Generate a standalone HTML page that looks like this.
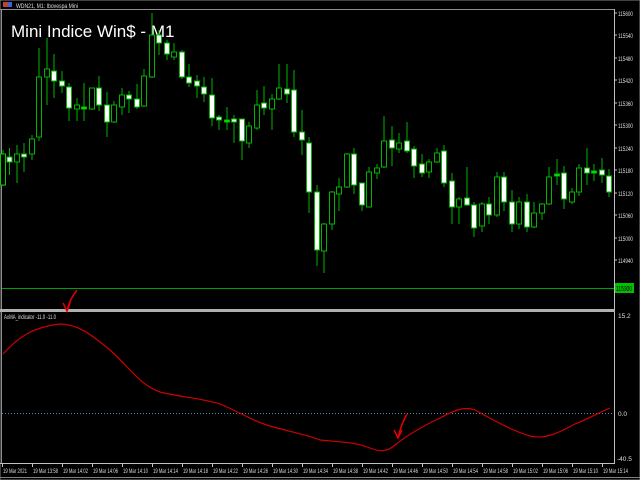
<!DOCTYPE html>
<html><head><meta charset="utf-8"><style>
html,body{margin:0;padding:0;background:#000;width:640px;height:480px;overflow:hidden}
svg{display:block}
text{font-family:"Liberation Sans",sans-serif}
</style></head><body>
<svg width="640" height="480" viewBox="0 0 640 480" xmlns="http://www.w3.org/2000/svg">
<rect width="640" height="480" fill="#000"/>
<rect x="0" y="0" width="640" height="480" fill="none" stroke="#808080" stroke-width="1"/>
<rect x="3" y="2" width="5" height="5" fill="#c04040"/><rect x="8" y="2" width="4" height="5" fill="#4060d0"/>
<text x="16" y="8" font-size="6" fill="#ddd" textLength="62" lengthAdjust="spacingAndGlyphs">WDN21, M1: Ibovespa Mini</text>
<line x1="1.5" y1="9" x2="1.5" y2="464" stroke="#909090"/>
<line x1="0" y1="9.5" x2="614" y2="9.5" stroke="#909090"/>
<line x1="614.5" y1="9" x2="614.5" y2="464" stroke="#c0c0c0"/>
<rect x="0" y="309" width="615" height="3" fill="#b0b0b0"/>
<line x1="0" y1="463.5" x2="615" y2="463.5" stroke="#c0c0c0"/>
<line x1="0" y1="477.5" x2="640" y2="477.5" stroke="#808080"/>
<text x="11" y="37" font-size="17" fill="#fff">Mini Indice Win$ - M1</text>
<g stroke="#00b400" stroke-width="1" shape-rendering="crispEdges">
<line x1="3" y1="150" x2="3" y2="186"/><rect x="0.5" y="154" width="5" height="31" fill="#000" stroke="#00d000"/>
<line x1="9.5" y1="148" x2="9.5" y2="175"/><rect x="7" y="157" width="5" height="5" fill="#fff"/>
<line x1="17" y1="145" x2="17" y2="183"/><rect x="14.5" y="154" width="5" height="8" fill="#000"/>
<line x1="24" y1="143" x2="24" y2="172"/><rect x="21.5" y="154" width="5" height="3" fill="#fff"/>
<line x1="32" y1="135" x2="32" y2="160"/><rect x="29.5" y="139" width="5" height="15" fill="#000"/>
<line x1="39" y1="48" x2="39" y2="141"/><rect x="36.5" y="77" width="5" height="60" fill="#000"/>
<line x1="47" y1="38" x2="47" y2="105"/><rect x="44.5" y="69" width="5" height="8" fill="#000"/>
<line x1="54" y1="54" x2="54" y2="98"/><rect x="51.5" y="71" width="5" height="10" fill="#fff"/>
<line x1="62" y1="71" x2="62" y2="93"/><rect x="59.5" y="81" width="5" height="5" fill="#fff"/>
<line x1="69" y1="83" x2="69" y2="121"/><rect x="66.5" y="87" width="5" height="21" fill="#fff"/>
<line x1="77" y1="98" x2="77" y2="121"/><rect x="74.5" y="105" width="5" height="4" fill="#000"/>
<line x1="84" y1="83" x2="84" y2="121"/><rect x="81.5" y="107" width="5" height="2" fill="#00ff00"/>
<line x1="92" y1="88" x2="92" y2="110"/><rect x="89.5" y="88" width="5" height="21" fill="#000"/>
<line x1="99" y1="76" x2="99" y2="111"/><rect x="96.5" y="88" width="5" height="17" fill="#fff"/>
<line x1="107" y1="92" x2="107" y2="137"/><rect x="104.5" y="105" width="5" height="17" fill="#fff"/>
<line x1="114" y1="101" x2="114" y2="123"/><rect x="111.5" y="105" width="5" height="17" fill="#000"/>
<line x1="122" y1="88" x2="122" y2="115"/><rect x="119.5" y="95" width="5" height="12" fill="#000"/>
<line x1="129" y1="91" x2="129" y2="113"/><rect x="126.5" y="95" width="5" height="4" fill="#fff"/>
<line x1="137" y1="84" x2="137" y2="109"/><rect x="134.5" y="99" width="5" height="8" fill="#fff"/>
<line x1="144" y1="69" x2="144" y2="107"/><rect x="141.5" y="76" width="5" height="30" fill="#000"/>
<line x1="152" y1="13" x2="152" y2="78"/><rect x="149.5" y="35" width="5" height="42" fill="#000"/>
<line x1="159" y1="30" x2="159" y2="55"/><rect x="156.5" y="35" width="5" height="8" fill="#fff"/>
<line x1="167" y1="40" x2="167" y2="60"/><rect x="164.5" y="43" width="5" height="11" fill="#fff"/>
<line x1="174" y1="43" x2="174" y2="60"/><rect x="171.5" y="52" width="5" height="5" fill="#000"/>
<line x1="182" y1="50" x2="182" y2="79"/><rect x="179.5" y="52" width="5" height="25" fill="#fff"/>
<line x1="189" y1="64" x2="189" y2="87"/><rect x="186.5" y="77" width="5" height="6" fill="#fff"/>
<line x1="197" y1="75" x2="197" y2="98"/><rect x="194.5" y="81" width="5" height="5" fill="#fff"/>
<line x1="204" y1="77" x2="204" y2="102"/><rect x="201.5" y="87" width="5" height="7" fill="#fff"/>
<line x1="212" y1="78" x2="212" y2="126"/><rect x="209.5" y="95" width="5" height="23" fill="#fff"/>
<line x1="219" y1="115" x2="219" y2="130"/><rect x="216.5" y="117" width="5" height="3" fill="#fff"/>
<line x1="227" y1="107" x2="227" y2="130"/><rect x="224.5" y="120" width="5" height="2" fill="#00ff00"/>
<line x1="234" y1="115" x2="234" y2="143"/><rect x="231.5" y="119" width="5" height="3" fill="#fff"/>
<line x1="242" y1="119" x2="242" y2="160"/><rect x="239.5" y="119" width="5" height="22" fill="#fff"/>
<line x1="249" y1="122" x2="249" y2="148"/><rect x="246.5" y="126" width="5" height="17" fill="#000"/>
<line x1="257" y1="90" x2="257" y2="130"/><rect x="254.5" y="105" width="5" height="23" fill="#000"/>
<line x1="264" y1="86" x2="264" y2="115"/><rect x="261.5" y="103" width="5" height="5" fill="#fff"/>
<line x1="272" y1="94" x2="272" y2="130"/><rect x="269.5" y="99" width="5" height="10" fill="#000"/>
<line x1="279" y1="64" x2="279" y2="100"/><rect x="276.5" y="88" width="5" height="11" fill="#000"/>
<line x1="287" y1="64" x2="287" y2="103"/><rect x="284.5" y="89" width="5" height="5" fill="#fff"/>
<line x1="294" y1="70" x2="294" y2="137"/><rect x="291.5" y="90" width="5" height="42" fill="#fff"/>
<line x1="302" y1="110" x2="302" y2="155"/><rect x="299.5" y="132" width="5" height="8" fill="#fff"/>
<line x1="309" y1="137" x2="309" y2="213"/><rect x="306.5" y="143" width="5" height="49" fill="#fff"/>
<line x1="317" y1="185" x2="317" y2="266"/><rect x="314.5" y="192" width="5" height="58" fill="#fff"/>
<line x1="324" y1="223" x2="324" y2="273"/><rect x="321.5" y="224" width="5" height="27" fill="#000"/>
<line x1="332" y1="191" x2="332" y2="230"/><rect x="329.5" y="192" width="5" height="32" fill="#000"/>
<line x1="339" y1="178" x2="339" y2="211"/><rect x="336.5" y="187" width="5" height="7" fill="#000"/>
<line x1="347" y1="153" x2="347" y2="188"/><rect x="344.5" y="154" width="5" height="33" fill="#000"/>
<line x1="354" y1="148" x2="354" y2="194"/><rect x="351.5" y="154" width="5" height="31" fill="#fff"/>
<line x1="362" y1="183" x2="362" y2="211"/><rect x="359.5" y="183" width="5" height="22" fill="#fff"/>
<line x1="369" y1="167" x2="369" y2="207"/><rect x="366.5" y="172" width="5" height="35" fill="#000"/>
<line x1="377" y1="164" x2="377" y2="179"/><rect x="374.5" y="168" width="5" height="5" fill="#000"/>
<line x1="384" y1="116" x2="384" y2="168"/><rect x="381.5" y="141" width="5" height="26" fill="#000"/>
<line x1="392" y1="126" x2="392" y2="166"/><rect x="389.5" y="140" width="5" height="8" fill="#fff"/>
<line x1="399" y1="133" x2="399" y2="153"/><rect x="396.5" y="143" width="5" height="6" fill="#000"/>
<line x1="407" y1="122" x2="407" y2="153"/><rect x="404.5" y="141" width="5" height="10" fill="#fff"/>
<line x1="414" y1="146" x2="414" y2="178"/><rect x="411.5" y="149" width="5" height="17" fill="#fff"/>
<line x1="422" y1="154" x2="422" y2="177"/><rect x="419.5" y="164" width="5" height="9" fill="#fff"/>
<line x1="429" y1="159" x2="429" y2="178"/><rect x="426.5" y="162" width="5" height="10" fill="#000"/>
<line x1="437" y1="148" x2="437" y2="163"/><rect x="434.5" y="153" width="5" height="9" fill="#000"/>
<line x1="444" y1="145" x2="444" y2="187"/><rect x="441.5" y="151" width="5" height="32" fill="#fff"/>
<line x1="452" y1="173" x2="452" y2="224"/><rect x="449.5" y="181" width="5" height="26" fill="#fff"/>
<line x1="459" y1="197" x2="459" y2="224"/><rect x="456.5" y="199" width="5" height="8" fill="#000"/>
<line x1="467" y1="167" x2="467" y2="206"/><rect x="464.5" y="198" width="5" height="7" fill="#fff"/>
<line x1="474" y1="202" x2="474" y2="237"/><rect x="471.5" y="205" width="5" height="23" fill="#fff"/>
<line x1="482" y1="202" x2="482" y2="232"/><rect x="479.5" y="204" width="5" height="22" fill="#000"/>
<line x1="489" y1="197" x2="489" y2="224"/><rect x="486.5" y="204" width="5" height="11" fill="#fff"/>
<line x1="497" y1="172" x2="497" y2="217"/><rect x="494.5" y="177" width="5" height="38" fill="#000"/>
<line x1="504" y1="172" x2="504" y2="211"/><rect x="501.5" y="177" width="5" height="25" fill="#fff"/>
<line x1="512" y1="190" x2="512" y2="232"/><rect x="509.5" y="202" width="5" height="22" fill="#fff"/>
<line x1="519" y1="197" x2="519" y2="229"/><rect x="516.5" y="202" width="5" height="22" fill="#000"/>
<line x1="527" y1="194" x2="527" y2="232"/><rect x="524.5" y="202" width="5" height="25" fill="#fff"/>
<line x1="534" y1="202" x2="534" y2="228"/><rect x="531.5" y="213" width="5" height="14" fill="#000"/>
<line x1="542" y1="203" x2="542" y2="220"/><rect x="539.5" y="204" width="5" height="9" fill="#000"/>
<line x1="549" y1="167" x2="549" y2="205"/><rect x="546.5" y="177" width="5" height="27" fill="#000"/>
<line x1="557" y1="159" x2="557" y2="185"/><rect x="554.5" y="174" width="5" height="2" fill="#00ff00"/>
<line x1="564" y1="166" x2="564" y2="209"/><rect x="561.5" y="173" width="5" height="26" fill="#fff"/>
<line x1="572" y1="188" x2="572" y2="204"/><rect x="569.5" y="192" width="5" height="10" fill="#000"/>
<line x1="579" y1="164" x2="579" y2="196"/><rect x="576.5" y="168" width="5" height="24" fill="#000"/>
<line x1="587" y1="148" x2="587" y2="185"/><rect x="584.5" y="168" width="5" height="5" fill="#fff"/>
<line x1="594" y1="164" x2="594" y2="181"/><rect x="591.5" y="171" width="5" height="2" fill="#00ff00"/>
<line x1="602" y1="158" x2="602" y2="183"/><rect x="599.5" y="170" width="5" height="5" fill="#fff"/>
<line x1="609" y1="169" x2="609" y2="197"/><rect x="606.5" y="176" width="5" height="16" fill="#fff"/>
</g>
<line x1="2" y1="288.5" x2="614" y2="288.5" stroke="#00a000"/>
<rect x="615" y="283" width="19" height="10" fill="#00c000"/>
<text x="616" y="291" font-size="7" fill="#000" textLength="16" lengthAdjust="spacingAndGlyphs">115300</text>
<g font-size="6.5" fill="#ddd">
<text x="618" y="16" textLength="15" lengthAdjust="spacingAndGlyphs">115600</text><text x="618" y="38" textLength="15" lengthAdjust="spacingAndGlyphs">115540</text><text x="618" y="61" textLength="15" lengthAdjust="spacingAndGlyphs">115480</text>
<text x="618" y="83" textLength="15" lengthAdjust="spacingAndGlyphs">115420</text><text x="618" y="106" textLength="15" lengthAdjust="spacingAndGlyphs">115360</text><text x="618" y="128" textLength="15" lengthAdjust="spacingAndGlyphs">115300</text>
<text x="618" y="151" textLength="15" lengthAdjust="spacingAndGlyphs">115240</text><text x="618" y="173" textLength="15" lengthAdjust="spacingAndGlyphs">115180</text><text x="618" y="196" textLength="15" lengthAdjust="spacingAndGlyphs">115120</text>
<text x="618" y="218" textLength="15" lengthAdjust="spacingAndGlyphs">115060</text><text x="618" y="241" textLength="15" lengthAdjust="spacingAndGlyphs">115000</text><text x="618" y="263" textLength="15" lengthAdjust="spacingAndGlyphs">114940</text>
<text x="618" y="318">15.2</text><text x="618" y="416">0.0</text><text x="617" y="461">-40.5</text>
</g>
<g stroke="#c0c0c0"><line x1="614" y1="13" x2="617" y2="13"/><line x1="614" y1="35" x2="617" y2="35"/><line x1="614" y1="58" x2="617" y2="58"/><line x1="614" y1="80" x2="617" y2="80"/><line x1="614" y1="103" x2="617" y2="103"/><line x1="614" y1="125" x2="617" y2="125"/><line x1="614" y1="148" x2="617" y2="148"/><line x1="614" y1="170" x2="617" y2="170"/><line x1="614" y1="193" x2="617" y2="193"/><line x1="614" y1="215" x2="617" y2="215"/><line x1="614" y1="238" x2="617" y2="238"/><line x1="614" y1="260" x2="617" y2="260"/></g>
<text x="4" y="319" font-size="6" fill="#ddd" textLength="52" lengthAdjust="spacingAndGlyphs">AxMA_indicator -11.0 -11.0</text>
<line x1="2" y1="413.5" x2="614" y2="413.5" stroke="#4090c0" stroke-dasharray="1,2"/>
<path d="M3,354 C20,335 35,327 60,324 C80,324 95,338 110,350 C130,368 140,385 160,392 C180,397 200,398 220,404 C240,412 250,420 270,426 C290,432 305,434 320,440 C340,442 355,442 370,448 C380,452 387,452 395,445 C410,433 425,425 440,418 C455,410 465,406 475,410 C490,418 510,430 530,436 C545,440 560,432 575,424 C590,418 600,412 610,408" fill="none" stroke="#d00000" stroke-width="1.2"/>
<g stroke="#e00000" stroke-width="1.6" fill="none">
<path d="M77,290 C72,296 69,302 67,311"/><path d="M63,303 L67,311 L70,303"/>
<path d="M407,414 C403,422 400,428 398,438"/><path d="M394,430 L398,438 L402,430"/>
</g>
<g stroke="#c0c0c0"><line x1="2.5" y1="463" x2="2.5" y2="467"/><line x1="32.5" y1="463" x2="32.5" y2="467"/><line x1="62.5" y1="463" x2="62.5" y2="467"/><line x1="92.5" y1="463" x2="92.5" y2="467"/><line x1="122.5" y1="463" x2="122.5" y2="467"/><line x1="152.5" y1="463" x2="152.5" y2="467"/><line x1="182.5" y1="463" x2="182.5" y2="467"/><line x1="212.5" y1="463" x2="212.5" y2="467"/><line x1="242.5" y1="463" x2="242.5" y2="467"/><line x1="272.5" y1="463" x2="272.5" y2="467"/><line x1="302.5" y1="463" x2="302.5" y2="467"/><line x1="332.5" y1="463" x2="332.5" y2="467"/><line x1="362.5" y1="463" x2="362.5" y2="467"/><line x1="392.5" y1="463" x2="392.5" y2="467"/><line x1="422.5" y1="463" x2="422.5" y2="467"/><line x1="452.5" y1="463" x2="452.5" y2="467"/><line x1="482.5" y1="463" x2="482.5" y2="467"/><line x1="512.5" y1="463" x2="512.5" y2="467"/><line x1="542.5" y1="463" x2="542.5" y2="467"/><line x1="572.5" y1="463" x2="572.5" y2="467"/><line x1="602.5" y1="463" x2="602.5" y2="467"/></g>
<g font-size="6" fill="#ddd" lengthAdjust="spacingAndGlyphs">
<text x="3" y="473" textLength="24" lengthAdjust="spacingAndGlyphs">19 Mar 2021</text><text x="33" y="473" textLength="25" lengthAdjust="spacingAndGlyphs">19 Mar 13:58</text><text x="63" y="473" textLength="25" lengthAdjust="spacingAndGlyphs">19 Mar 14:02</text>
<text x="93" y="473" textLength="25" lengthAdjust="spacingAndGlyphs">19 Mar 14:06</text><text x="123" y="473" textLength="25" lengthAdjust="spacingAndGlyphs">19 Mar 14:10</text><text x="153" y="473" textLength="25" lengthAdjust="spacingAndGlyphs">19 Mar 14:14</text>
<text x="183" y="473" textLength="25" lengthAdjust="spacingAndGlyphs">19 Mar 14:18</text><text x="213" y="473" textLength="25" lengthAdjust="spacingAndGlyphs">19 Mar 14:22</text><text x="243" y="473" textLength="25" lengthAdjust="spacingAndGlyphs">19 Mar 14:26</text>
<text x="273" y="473" textLength="25" lengthAdjust="spacingAndGlyphs">19 Mar 14:30</text><text x="303" y="473" textLength="25" lengthAdjust="spacingAndGlyphs">19 Mar 14:34</text><text x="333" y="473" textLength="25" lengthAdjust="spacingAndGlyphs">19 Mar 14:38</text>
<text x="363" y="473" textLength="25" lengthAdjust="spacingAndGlyphs">19 Mar 14:42</text><text x="393" y="473" textLength="25" lengthAdjust="spacingAndGlyphs">19 Mar 14:46</text><text x="423" y="473" textLength="25" lengthAdjust="spacingAndGlyphs">19 Mar 14:50</text>
<text x="453" y="473" textLength="25" lengthAdjust="spacingAndGlyphs">19 Mar 14:54</text><text x="483" y="473" textLength="25" lengthAdjust="spacingAndGlyphs">19 Mar 14:58</text><text x="513" y="473" textLength="25" lengthAdjust="spacingAndGlyphs">19 Mar 15:02</text>
<text x="543" y="473" textLength="25" lengthAdjust="spacingAndGlyphs">19 Mar 15:06</text><text x="573" y="473" textLength="25" lengthAdjust="spacingAndGlyphs">19 Mar 15:10</text><text x="603" y="473" textLength="25" lengthAdjust="spacingAndGlyphs">19 Mar 15:14</text>
</g>
</svg>
</body></html>
